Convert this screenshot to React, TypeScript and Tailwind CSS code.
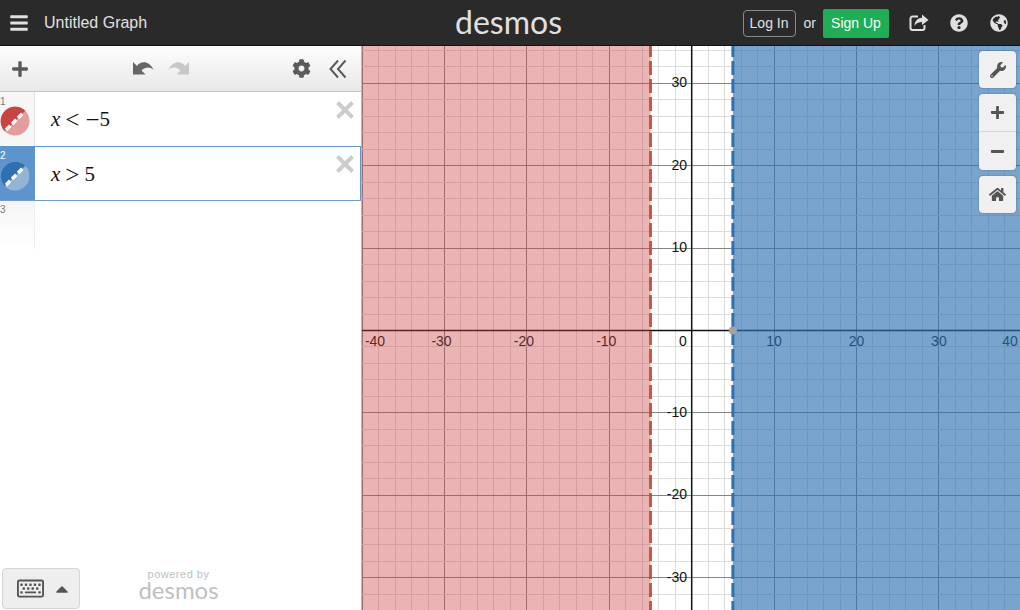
import React from "react";
import { FaBars, FaPlus, FaCog, FaWrench, FaMinus, FaHome, FaQuestionCircle, FaGlobeAmericas, FaRegKeyboard, FaCaretUp } from "react-icons/fa";

const W = 658;
const H = 564;
const OX = 329.7;
const OY = 284.5;
const U = 8.24;

function range(a: number, b: number, s: number) {
  const r: number[] = [];
  for (let i = a; i <= b; i += s) r.push(i);
  return r;
}

function Graph() {
  const xs = range(-40, 40, 2);
  const ys = range(-34, 34, 2);
  const px = (v: number) => OX + v * U;
  const py = (v: number) => OY - v * U;
  const xl = [-30, -20, -10, 10, 20, 30];
  const yl = [30, 20, 10, -10, -20, -30];
  return (
    <svg width={W} height={H} viewBox={`0 0 ${W} ${H}`} className="block" style={{ fontFamily: "'Liberation Sans', Arial, sans-serif" }}>
      <rect width={W} height={H} fill="#ffffff" />
      {xs.map((v) => (
        <line key={`x${v}`} x1={px(v)} x2={px(v)} y1={0} y2={H} stroke={v % 10 === 0 ? "#858585" : "#dcdcdc"} strokeWidth={1} shapeRendering="crispEdges" />
      ))}
      {ys.map((v) => (
        <line key={`y${v}`} y1={py(v)} y2={py(v)} x1={0} x2={W} stroke={v % 10 === 0 ? "#858585" : "#dcdcdc"} strokeWidth={1} shapeRendering="crispEdges" />
      ))}
      <line x1={OX} x2={OX} y1={0} y2={H} stroke="#111111" strokeWidth={1.5} />
      <line y1={OY} y2={OY} x1={0} x2={W} stroke="#111111" strokeWidth={1.5} />
      {xl.map((v) => (
        <text key={`lx${v}`} x={px(v) - (v < 0 ? 3 : 0)} y={300} textAnchor="middle" fontSize={14} fill="#111111">{v}</text>
      ))}
      <text x={13} y={300} textAnchor="middle" fontSize={14} fill="#111111">-40</text>
      <text x={648} y={300} textAnchor="middle" fontSize={14} fill="#111111">40</text>
      <text x={321} y={300} textAnchor="middle" fontSize={14} fill="#111111">0</text>
      {yl.map((v) => (
        <text key={`ly${v}`} x={325} y={py(v) + 4} textAnchor="end" fontSize={14} fill="#111111">{v}</text>
      ))}
      <rect x={0} y={0} width={px(-5)} height={H} fill="#c74440" fillOpacity={0.4} />
      <rect x={px(5)} y={0} width={W - px(5)} height={H} fill="#2d70b3" fillOpacity={0.64} />
      <line x1={px(-5)} x2={px(-5)} y1={0} y2={H} stroke="#c74440" strokeOpacity={0.9} strokeWidth={3} strokeDasharray="14 4" strokeDashoffset={3} />
      <line x1={px(5)} x2={px(5)} y1={0} y2={H} stroke="#2d70b3" strokeWidth={3} strokeDasharray="14 4" strokeDashoffset={3} />
      <circle cx={px(5)} cy={OY} r={4} fill="#a3a3a3" />
    </svg>
  );
}

function Swatch({ dark, light }: { dark: string; light: string }) {
  return (
    <svg width="30" height="30" viewBox="0 0 30 30" className="block">
      <circle cx="15" cy="15" r="14.5" fill={light} />
      <path d="M4.75 25.25 A14.5 14.5 0 0 1 25.25 4.75 Z" fill={dark} />
      <line x1="6" y1="24" x2="24" y2="6" stroke="#ffffff" strokeWidth="3.5" strokeDasharray="6 2.5" />
    </svg>
  );
}

function CloseX() {
  return (
    <svg width="20" height="20" viewBox="0 0 20 20" className="absolute right-[6px] top-[8px]">
      <path d="M2.5 2.5 L17.5 17.5 M17.5 2.5 L2.5 17.5" stroke="#cccccc" strokeWidth="4" fill="none" />
    </svg>
  );
}

function UndoArrow({ flip, color }: { flip?: boolean; color: string }) {
  return (
    <svg width="22" height="18" viewBox="0 0 22 18" className={flip ? "-scale-x-100" : ""}>
      <path d="M1 2 L1 14.5 L13.5 14.5 L9.5 10.5 C13 7 18 6.5 21.5 10 C18 1.5 9 0 5 6 Z" fill={color} />
    </svg>
  );
}

function ShareBox() {
  return (
    <svg width="20" height="18" viewBox="0 0 20 18">
      <path d="M9 2.5 H3.5 A2 2 0 0 0 1.5 4.5 V14 A2 2 0 0 0 3.5 16 H13.5 A2 2 0 0 0 15.5 14 V11" stroke="#e0e0e0" strokeWidth="2" fill="none" />
      <path d="M13 0.5 L19.5 6 L13 11 V8 C9.5 8 7 9 5.5 12 C5.5 7.5 8.5 4 13 3.8 Z" fill="#e0e0e0" />
    </svg>
  );
}

function Row({ n, active, dark, light, children }: { n: number; active?: boolean; dark: string; light: string; children: React.ReactNode }) {
  return (
    <div className={active ? "relative flex h-[55px] border-b border-[#6f9dc7]" : "relative flex h-[54px]"}>
      <div className={active ? "relative w-[35px] shrink-0 bg-[#5c94cb]" : "relative w-[35px] shrink-0 border-r border-[#e0e0e0] bg-[#f6f6f6]"}>
        <span className={active ? "absolute left-0 top-[5px] text-[10px] leading-none text-white" : "absolute left-0 top-[5px] text-[10px] leading-none text-[#777777]"}>{n}</span>
        <div className={active ? "absolute left-0 top-[15px]" : "absolute left-0 top-[14px]"}><Swatch dark={dark} light={light} /></div>
      </div>
      <div className={active ? "flex flex-1 items-center border-t border-r border-[#5c94cb] pb-[2px] pl-4" : "flex flex-1 items-center pb-[3px] pl-4"}>
        <div className="flex items-baseline text-[21px] leading-none text-[#111111] [font-family:'Liberation_Serif',serif]">{children}</div>
      </div>
      <CloseX />
    </div>
  );
}

function Tool({ children, rounded, h }: { children: React.ReactNode; rounded?: string; h?: string }) {
  return <div className={`flex w-[37px] items-center justify-center bg-[#f0f0f0] text-[#555555] ${h ?? "h-[37px]"} ${rounded ?? "rounded-[4px] shadow-[0_0_2px_rgba(0,0,0,0.35)]"}`}>{children}</div>;
}

export default function App() {
  return (
    <div className="flex h-[610px] w-[1020px] flex-col overflow-hidden bg-white [font-family:'Liberation_Sans',Arial,sans-serif]">
      <header className="relative flex h-[46px] shrink-0 items-center justify-between border-b border-[#111111] bg-[#2a2a2a] text-[#e0e0e0]">
        <div className="flex items-center">
          <FaBars className="ml-[9px]" size={20} />
          <span className="ml-[15px] text-[16px] leading-none">Untitled Graph</span>
        </div>
        <div className="absolute left-[455px] top-[2px] text-[32px] leading-[40px] text-[#e0e0e0] [font-family:Lato,sans-serif]">desmos</div>
        <div className="flex items-center pt-[1px]">
          <div className="flex h-[27px] w-[53px] items-center justify-center rounded-[4px] border border-[#8a8a8a] text-[14px]">Log In</div>
          <span className="ml-[8px] text-[14px]">or</span>
          <div className="ml-[7px] flex h-[29px] w-[66px] items-center justify-center rounded-[2px] bg-[#1fad55] text-[14px] text-white">Sign Up</div>
          <div className="ml-[20px]"><ShareBox /></div>
          <FaQuestionCircle className="ml-[21px]" size={18} />
          <FaGlobeAmericas className="ml-[22px] mr-[12px]" size={18} />
        </div>
      </header>
      <main className="flex min-h-0 flex-1">
        <aside className="relative flex w-[362px] shrink-0 flex-col border-r border-[#bbbbbb]">
          <div className="flex h-[46px] shrink-0 items-center border-b border-[#c4c4c4] bg-gradient-to-b from-[#fdfdfd] to-[#e8e8e8] text-[#5a5a5a]">
            <FaPlus className="ml-[11px]" size={18} />
            <div className="ml-[103px]"><UndoArrow color="#666666" /></div>
            <div className="ml-[14px]"><UndoArrow flip color="#c8c8c8" /></div>
            <FaCog className="ml-[102px]" size={19} />
            <svg width="18" height="20" viewBox="0 0 18 20" className="ml-[18px]">
              <path d="M9 1.5 L1.5 10 L9 18.5 M16.5 1.5 L9 10 L16.5 18.5" stroke="#5a5a5a" strokeWidth="2" fill="none" />
            </svg>
          </div>
          <Row n={1} dark="#c74440" light="#e29e9c">
            <i>x</i><span className="ml-[5px] mr-[6px] translate-y-[2px] text-[25px] leading-none">&lt;</span><span className="translate-y-[2px] text-[25px] leading-none">−</span><span>5</span>
          </Row>
          <Row n={2} active dark="#2d70b3" light="#93b4d5">
            <i>x</i><span className="ml-[5px] mr-[5px] translate-y-[2px] text-[25px] leading-none">&gt;</span><span>5</span>
          </Row>
          <div className="relative h-[48px] w-[35px] border-r border-[#eeeeee] bg-gradient-to-b from-[#f6f6f6] to-white">
            <span className="absolute left-0 top-[4px] text-[10px] leading-none text-[#777777]">3</span>
          </div>
          <div className="absolute bottom-[1px] left-[2px] flex h-[41px] w-[78px] items-center rounded-[4px] border border-[#d5d5d5] bg-[#eeeeee] pl-[14px] text-[#555555]">
            <FaRegKeyboard size={27} />
            <FaCaretUp className="ml-[8px]" size={20} />
          </div>
          <div className="absolute left-[139px] top-[522px] flex w-[79px] flex-col items-center text-[#c0c0c0]">
            <span className="text-[11px] leading-[12px] tracking-[0.5px]">powered by</span>
            <span className="text-[24px] leading-[20px] [font-family:Lato,sans-serif]">desmos</span>
          </div>
        </aside>
        <section className="relative min-w-0 flex-1 overflow-hidden">
          <Graph />
          <div className="absolute right-[4px] top-[5px] flex flex-col gap-[6px]">
            <Tool><FaWrench size={16} /></Tool>
            <div className="flex flex-col divide-y divide-[#d5d5d5] rounded-[4px] shadow-[0_0_2px_rgba(0,0,0,0.35)]">
              <Tool h="h-[38px]" rounded="rounded-t-[4px]"><FaPlus size={15} /></Tool>
              <Tool h="h-[38px]" rounded="rounded-b-[4px]"><FaMinus size={15} /></Tool>
            </div>
            <Tool><FaHome size={17} /></Tool>
          </div>
        </section>
      </main>
    </div>
  );
}
